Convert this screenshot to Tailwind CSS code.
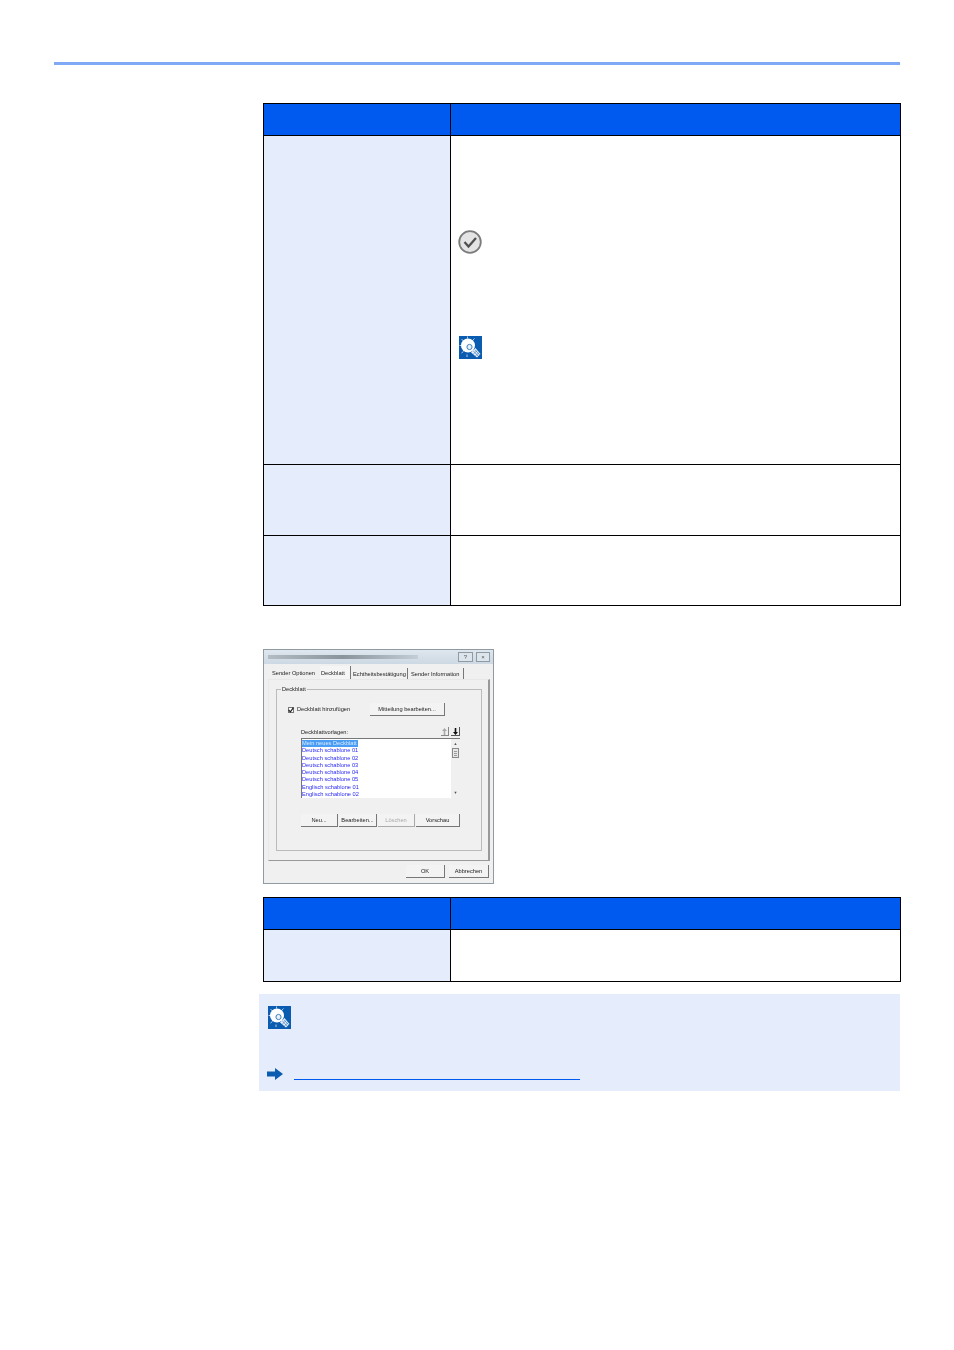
<!DOCTYPE html>
<html lang="de">
<head>
<meta charset="utf-8">
<script src="https://cdn.jsdelivr.net/npm/@tailwindcss/browser@4"></script>
</head>
<body class="bg-white">
<div class="w-[954px] h-[1350px] overflow-hidden pt-[62px] font-['Liberation_Sans',sans-serif]">
  <div class="ml-[54px] w-[846px] h-[3px] bg-[#7fa9f5]"></div>
  <div class="ml-[259px] w-[642px] mt-[38px]">
    <div class="ml-[4px] w-[638px] grid grid-cols-[186px_449px] grid-rows-[31px_328px_70px_69px] gap-px p-px bg-black">
      <div class="bg-[#005af0]"></div><div class="bg-[#005af0]"></div>
      <div class="bg-[#e5ecfb]"></div>
      <div class="bg-white pl-[7px] pt-[94px]">
        <svg class="w-6 h-6" viewBox="0 0 24 24"><circle cx="12" cy="12" r="10.800" fill="#e4e4e4" stroke="#7c7c7c" stroke-width="1.800"/><path d="M6.500 12l4 4.500 7.500-8.500" fill="none" stroke="#505050" stroke-width="2.200"/></svg>
        <svg class="w-[23px] h-[23px] mt-[82px] ml-px" viewBox="0 0 23 23"><rect width="23" height="23" fill="#0a5cb0"/><path d="M2.500 3l2 2M8.500 .5v2M15.500 2.500l-2 2M.5 9.500h2M2.500 17l2-1.500M8 18.500v2.500" stroke="#dce8f5" stroke-width=".8"/><circle cx="9" cy="9.500" r="7" fill="#fff"/><circle cx="10.500" cy="11" r="2.600" fill="#eaf1f9" stroke="#3d7fc0" stroke-width="1"/><path d="M12 16.500l4.500-4.500 5 6-3.500 3.500z" fill="#e6eff8"/><path d="M14.500 15l4.500 5M16 13.800l4.500 5M14 18.500l4-4M16 20.500l4-4" stroke="#0a5cb0" stroke-width=".5"/></svg>
      </div>
      <div class="bg-[#e5ecfb]"></div><div class="bg-white"></div>
      <div class="bg-[#e5ecfb]"></div><div class="bg-white"></div>
    </div>

    <div class="ml-[4px] mt-[43px] w-[231px] h-[235px] border border-[#8f9aa3] bg-[#f0f0f0] text-[5.700px] leading-[7px] text-[#222] blur-[0.35px] flex flex-col">
      <div class="h-[14px] shrink-0 bg-gradient-to-b from-[#dfe7ee] to-[#ccd8e3] flex items-center justify-between pl-[4px] pr-[3px]">
        <div class="w-[150px] h-[4px] bg-gradient-to-r from-[#b3bcc3] via-[#8a949b] to-[#c3ced7]"></div>
        <div class="flex gap-[3px]">
          <div class="w-[15px] h-[10px] border border-[#8f9aa3] bg-[#dde5ec] text-[#555] flex items-center justify-center text-[6px]">?</div>
          <div class="w-[14px] h-[10px] border border-[#8f9aa3] bg-[#dde5ec] text-[#555] flex items-center justify-center text-[6px]">×</div>
        </div>
      </div>
      <div class="h-[15px] shrink-0 flex items-end pl-[7px] whitespace-nowrap">
        <div class="w-[49px] pl-px h-[11px] pt-[2px]">Sender Optionen</div>
        <div class="w-[31px] h-[13px] pl-px bg-[#f5f5f5] border-r border-[#777] pt-[4px]">Deckblatt</div>
        <div class="w-[57px] pl-[2px] h-[11px] pt-[3px] border-r border-[#777]">Echtheitsbestätigung</div>
        <div class="w-[56px] pl-[3px] h-[11px] pt-[3px] border-r border-[#777]">Sender Information</div>
      </div>
      <div class="ml-[4px] mr-[3px] h-[182px] shrink-0 border-t border-r-2 border-b border-l border-t-[#e8e8e8] border-r-[#999] border-b-[#999] border-l-[#e8e8e8] pl-[7px] pr-[6px] pt-[9px]">
        <div class="relative h-[162px] border border-[#bbb] pl-[11px] pt-[13px]">
          <div class="absolute -top-[4px] left-[4px] bg-[#f0f0f0] px-px">Deckblatt</div>
          <div class="flex items-center h-[13px]">
            <div class="w-[6px] h-[6px] border border-[#777] bg-white flex items-center justify-center">
              <svg class="w-[6px] h-[6px] shrink-0" viewBox="0 0 5 5"><path d="M.5 2.500l1.500 1.500 2.500-3.500" fill="none" stroke="#222"/></svg>
            </div>
            <span class="ml-[3px] w-[73px]">Deckblatt hinzufügen</span>
            <div class="w-[75px] h-[13px] border-r border-b border-[#777] bg-[#f3f3f3] text-center leading-[12px]">Mitteilung bearbeiten...</div>
          </div>
          <div class="ml-[13px] mt-[11px] w-[159px]">
            <div class="flex items-end justify-between h-[9px]">
              <span>Deckblattvorlagen:</span>
              <div class="flex gap-[2px]">
                <div class="w-[8px] h-[9px] border-r border-b border-[#888] flex items-center justify-center">
                  <svg class="w-[5px] h-[7px]" viewBox="0 0 5 7"><path d="M2.500 0L5 3H3.300v4H1.700V3H0z" fill="#aaa"/></svg>
                </div>
                <div class="w-[9px] h-[9px] border-r border-b border-[#555] flex items-center justify-center">
                  <svg class="w-[5px] h-[7px]" viewBox="0 0 5 7"><path d="M2.500 7L5 4H3.300V0H1.700v4H0z" fill="#111"/></svg>
                </div>
              </div>
            </div>
            <div class="mt-[2px] h-[60px] border-t border-l border-[#777] bg-white flex text-[#2a2af5] leading-[7.300px]">
              <div class="flex-1 pt-px whitespace-nowrap">
                <div class="w-[56px] bg-[#4a9df5] text-[#dbeafe]">Mein neues Deckblatt</div>
                <div>Deutsch schablone 01</div>
                <div>Deutsch schablone 02</div>
                <div>Deutsch schablone 03</div>
                <div>Deutsch schablone 04</div>
                <div>Deutsch schablone 05</div>
                <div>Englisch schablone 01</div>
                <div>Englisch schablone 02</div>
              </div>
              <div class="w-[9px] bg-[#f0f0f0] flex flex-col items-center py-[3px] text-[#555] text-[4px] leading-[4px]">
                <div>▲</div>
                <div class="w-[7px] h-[10px] mt-[2px] border border-[#888] bg-[#e8e8e8] flex flex-col justify-center gap-px">
                  <div class="h-px mx-px bg-[#999]"></div>
                  <div class="h-px mx-px bg-[#999]"></div>
                  <div class="h-px mx-px bg-[#999]"></div>
                </div>
                <div class="mt-auto">▼</div>
              </div>
            </div>
            <div class="mt-[16px] flex h-[13px] text-center leading-[12px]">
              <div class="w-[37px] mr-px border-r border-b border-[#777] bg-[#f3f3f3]">Neu...</div>
              <div class="w-[38px] mr-px border-r border-b border-[#777] bg-[#f3f3f3]">Bearbeiten...</div>
              <div class="w-[37px] mr-px border-r border-b border-[#aaa] bg-[#f3f3f3] text-[#aaa]">Löschen</div>
              <div class="w-[44px] border-r border-b border-[#777] bg-[#f3f3f3]">Vorschau</div>
            </div>
          </div>
        </div>
      </div>
      <div class="flex justify-end gap-[4px] pr-[4px] pt-[4px] text-center leading-[12px]">
        <div class="w-[39px] h-[13px] border-r border-b border-[#777] bg-[#f3f3f3]">OK</div>
        <div class="w-[40px] h-[13px] border-r border-b border-[#777] bg-[#f3f3f3]">Abbrechen</div>
      </div>
    </div>

    <div class="ml-[4px] mt-[13px] w-[638px] grid grid-cols-[186px_449px] grid-rows-[31px_51px] gap-px p-px bg-black">
      <div class="bg-[#005af0]"></div><div class="bg-[#005af0]"></div>
      <div class="bg-[#e5ecfb]"></div><div class="bg-white"></div>
    </div>

    <div class="mt-[12px] w-[641px] h-[97px] bg-[#e5ecfb] pl-[9px] pt-[12px]">
      <svg class="w-[23px] h-[23px]" viewBox="0 0 23 23"><rect width="23" height="23" fill="#0a5cb0"/><path d="M2.500 3l2 2M8.500 .5v2M15.500 2.500l-2 2M.5 9.500h2M2.500 17l2-1.500M8 18.500v2.500" stroke="#dce8f5" stroke-width=".8"/><circle cx="9" cy="9.500" r="7" fill="#fff"/><circle cx="10.500" cy="11" r="2.600" fill="#eaf1f9" stroke="#3d7fc0" stroke-width="1"/><path d="M12 16.500l4.500-4.500 5 6-3.500 3.500z" fill="#e6eff8"/><path d="M14.500 15l4.500 5M16 13.800l4.500 5M14 18.500l4-4M16 20.500l4-4" stroke="#0a5cb0" stroke-width=".5"/></svg>
      <div class="flex items-end mt-[39px] -ml-px">
        <svg class="w-4 h-3 shrink-0" viewBox="0 0 16 12"><path d="M0 3.500h8V0l8 6-8 6V8.500H0z" fill="#0a5cb0"/></svg>
        <div class="ml-[11px] w-[286px] h-px bg-[#005af0]"></div>
      </div>
    </div>
  </div>
</div>
</body>
</html>
